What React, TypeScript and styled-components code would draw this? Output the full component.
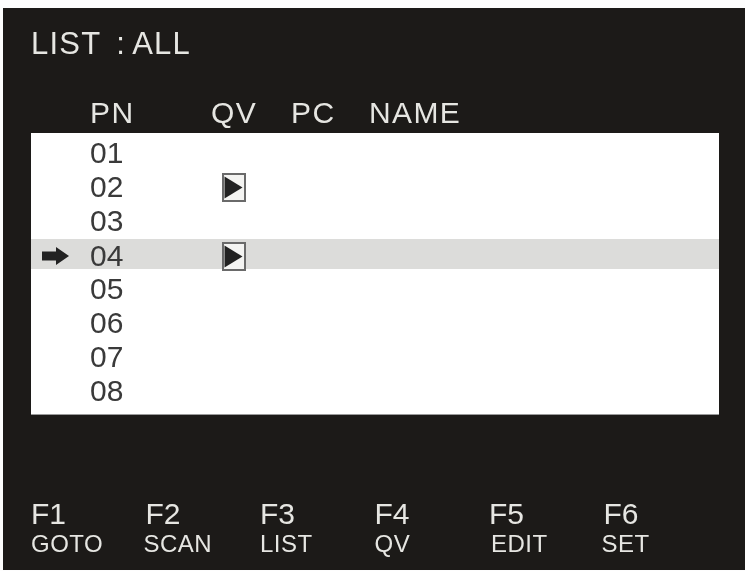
import React from 'react';
import styled, { createGlobalStyle } from 'styled-components';

const GlobalStyle = createGlobalStyle`
  html, body {
    margin: 0;
    padding: 0;
    background: #fdfdfd;
  }
`;

const Page = styled.div`
  width: 745px;
  height: 571px;
  padding: 8px 0 1px 3px;
  box-sizing: border-box;
  overflow: hidden;
`;

const Screen = styled.div`
  height: 100%;
  box-sizing: border-box;
  padding: 21px 26px 13px 28px;
  display: flex;
  flex-direction: column;
  background: #1c1a18;
  color: #e6e6e2;
  font-family: "Liberation Sans", Arial, sans-serif;
  filter: blur(0.5px);
`;

const Title = styled.div`
  font-size: 31px;
  line-height: 30px;
  letter-spacing: 1.2px;
  word-spacing: -2px;
  white-space: pre;
`;

const Colon = styled.span`
  margin-right: 6px;
`;

const Columns = styled.div`
  display: grid;
  grid-template-columns: 59px 121px 80px 78px 1fr;
  margin-top: 39px;
  height: 35px;
  font-size: 30px;
  line-height: 30px;
  letter-spacing: 1.4px;
`;

const Heading = styled.span<{ $col: number }>`
  grid-column: ${p => p.$col};
`;

const List = styled.div`
  display: flex;
  flex-direction: column;
  gap: 4px;
  padding: 5px 0 8px;
  background: #fff;
  color: #3a3a3a;
  border-bottom: 1px solid #9a9a9a;
`;

const Row = styled.div<{ $selected?: boolean }>`
  display: grid;
  grid-template-columns: 59px 132px 1fr;
  align-items: center;
  box-sizing: border-box;
  height: 30px;
  margin: ${p => (p.$selected ? '-1px 0 1px' : '0')};
  padding-top: ${p => (p.$selected ? '2px' : '0')};
  background: ${p => (p.$selected ? '#dcdcda' : 'transparent')};
`;

const Pointer = styled.svg`
  display: block;
  width: 27px;
  height: 18px;
  margin-left: 11px;
`;

const Number = styled.span`
  grid-column: 2;
  font-size: 30px;
  line-height: 30px;
`;

const QuickView = styled.svg`
  display: block;
  grid-column: 3;
  width: 24px;
  height: 29px;
`;

const Footer = styled.div`
  margin-top: auto;
  display: grid;
  grid-template-columns: repeat(6, 114.5px);
`;

const Key = styled.div`
  display: flex;
  flex-direction: column;
`;

const KeyName = styled.span`
  font-size: 30px;
  line-height: 30px;
`;

const KeyLabel = styled.span<{ $shift: number }>`
  margin-top: 2px;
  margin-left: ${p => p.$shift}px;
  font-size: 24px;
  line-height: 26px;
  letter-spacing: 0.5px;
  white-space: nowrap;
`;

const ports = [
  { pn: '01' },
  { pn: '02', qv: true },
  { pn: '03' },
  { pn: '04', qv: true, selected: true },
  { pn: '05' },
  { pn: '06' },
  { pn: '07' },
  { pn: '08' },
];

const keys = [
  { name: 'F1', label: 'GOTO', shift: 0 },
  { name: 'F2', label: 'SCAN', shift: -2 },
  { name: 'F3', label: 'LIST', shift: 0 },
  { name: 'F4', label: 'QV', shift: 0 },
  { name: 'F5', label: 'EDIT', shift: 2 },
  { name: 'F6', label: 'SET', shift: -2 },
];

const QvMark = () => (
  <QuickView viewBox="0 0 24 29">
    <rect x="1" y="1" width="22" height="27" fill="#f4f4f2" stroke="#6a6a6a" strokeWidth="2" />
    <path d="M2.5 3.5 L20.5 14.5 L2.5 25.5 Z" fill="#222" />
  </QuickView>
);

export default function App() {
  return (
    <Page>
      <GlobalStyle />
      <Screen>
        <Title>LIST  <Colon>:</Colon>ALL</Title>
        <Columns>
          <Heading $col={2}>PN</Heading>
          <Heading $col={3}>QV</Heading>
          <Heading $col={4}>PC</Heading>
          <Heading $col={5}>NAME</Heading>
        </Columns>
        <List>
          {ports.map(port => (
            <Row key={port.pn} $selected={port.selected}>
              {port.selected && (
                <Pointer viewBox="0 0 27 18">
                  <path d="M0 4.5 H14 V0 L27 9 L14 18 V13.5 H0 Z" fill="#222" />
                </Pointer>
              )}
              <Number>{port.pn}</Number>
              {port.qv && <QvMark />}
            </Row>
          ))}
        </List>
        <Footer>
          {keys.map(key => (
            <Key key={key.name}>
              <KeyName>{key.name}</KeyName>
              <KeyLabel $shift={key.shift}>{key.label}</KeyLabel>
            </Key>
          ))}
        </Footer>
      </Screen>
    </Page>
  );
}
